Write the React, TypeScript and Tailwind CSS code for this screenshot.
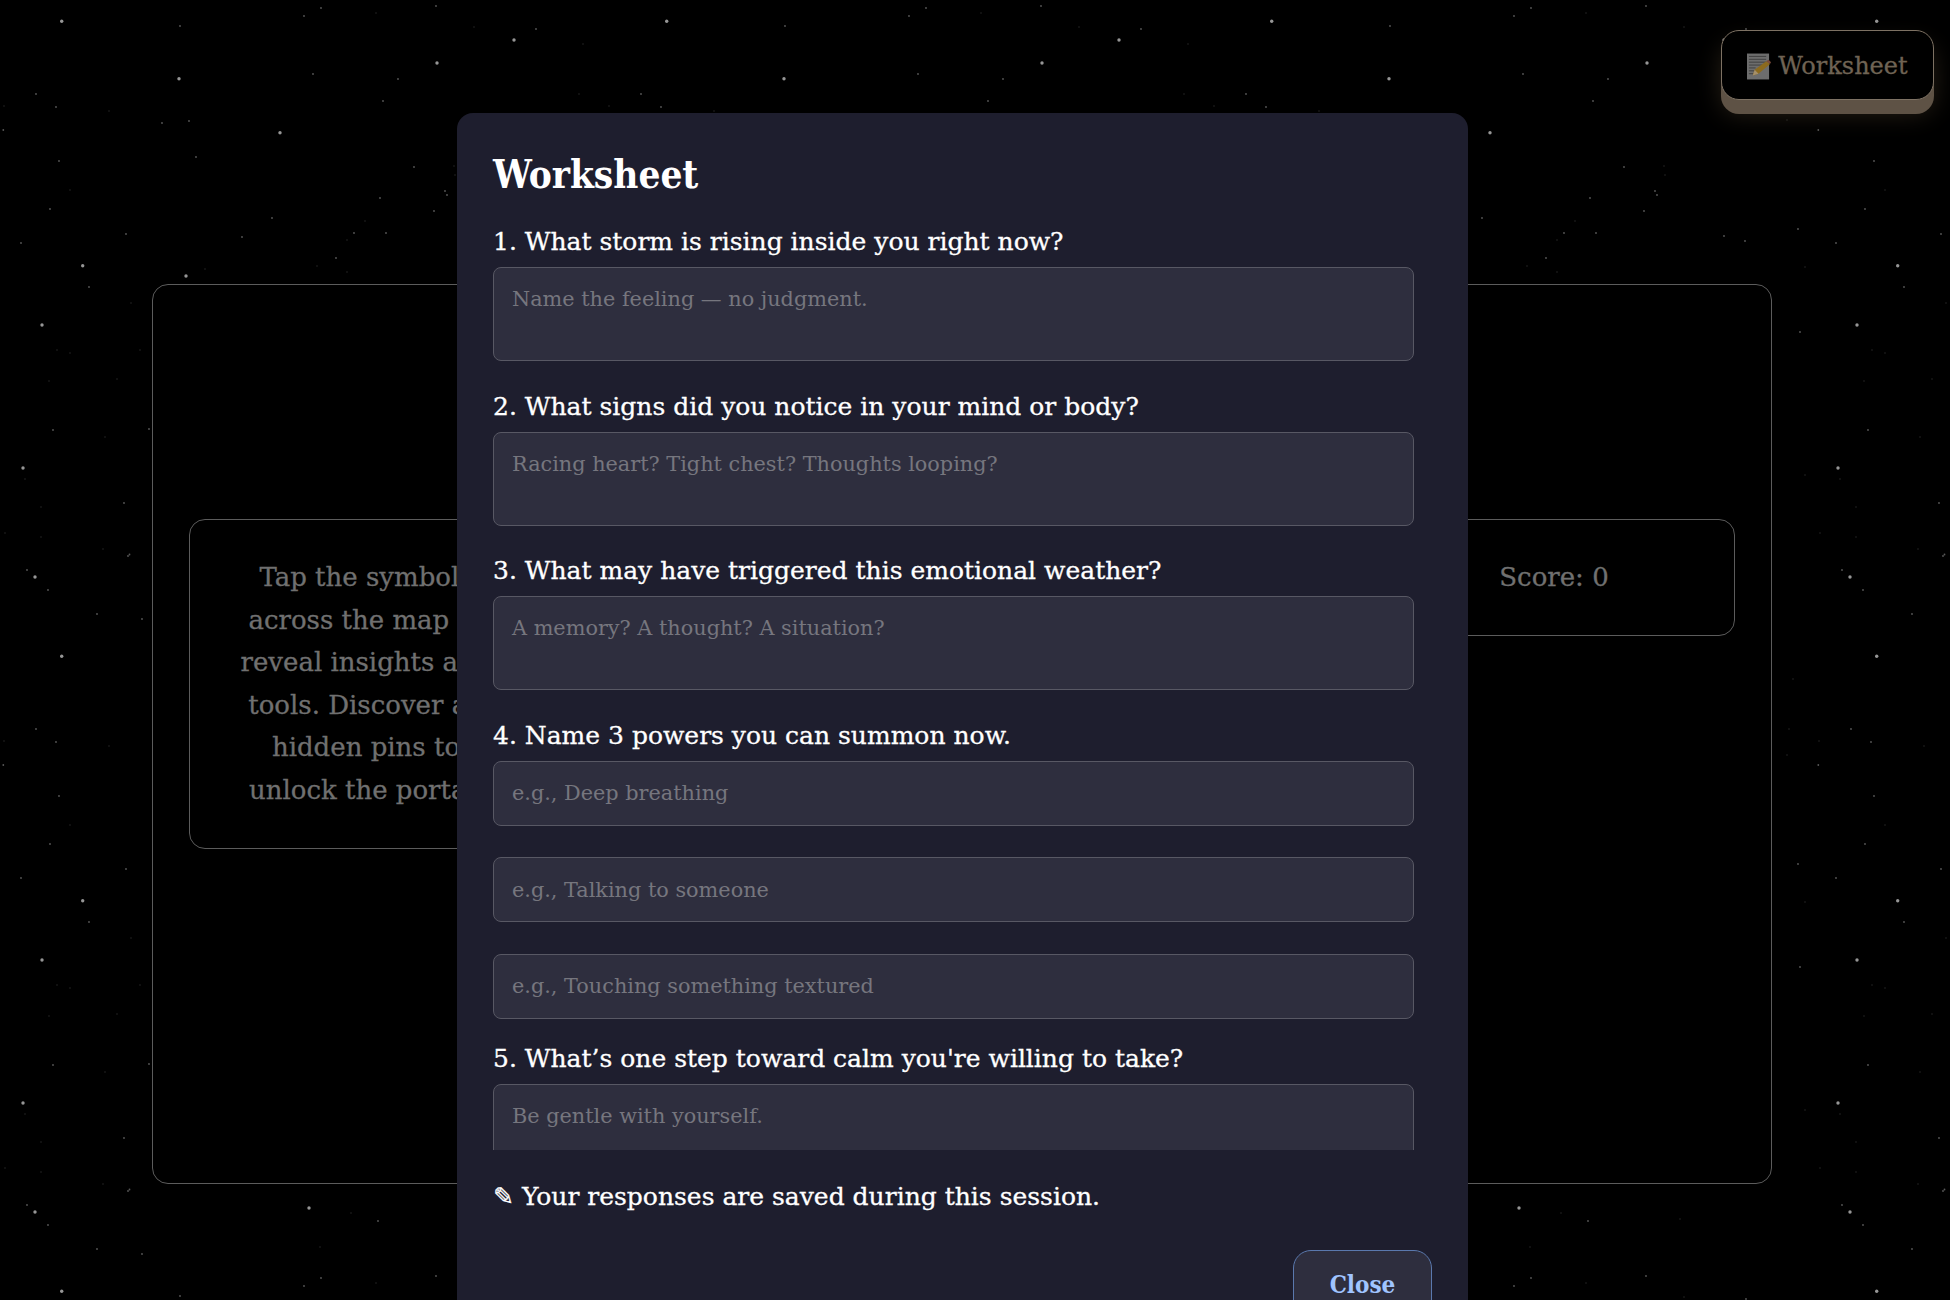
const BRIGHT: [number, number][] = [
  [61.7, 21.3], [437, 63], [179, 78.7], [280, 132.7], [82.7, 265.7], [186, 276],
  [42, 325], [23, 468], [35, 577], [309, 573], [514, 40],
];
const MEDIUM: [number, number][] = [
  [180, 26], [304, 16], [321, 8], [436, 6], [313, 74], [398, 79], [383, 101], [36, 94], [56, 107], [3.3, 130],
  [162, 123], [189, 121], [59, 161], [196, 157], [414, 167], [445, 191], [447, 195], [380, 198], [434, 211],
  [50, 209], [272, 218], [354, 233], [386, 233], [242, 237], [126, 234], [21, 243], [336, 258], [89, 287],
  [536, 29], [514, 236], [535, 241], [588, 229], [590, 332], [53, 430], [27, 570], [48, 590], [142, 619],
  [149, 429], [124, 503], [128, 556], [129.5, 554.5], [378, 586], [97, 614],
];
const FAINT: [number, number][] = [
  [4, 106], [109, 111], [70, 190], [365, 221], [347, 240], [317, 266], [347, 272], [205, 269], [454, 166],
  [455, 175], [474, 27], [583, 44], [579, 94], [577, 120], [595, 267], [595, 475], [5, 533], [105, 437],
  [140, 350], [117, 379], [57, 350], [70, 353], [49, 381], [25, 479], [41, 507], [41, 537], [131, 303],
  [103, 549], [351, 578], [470, 584], [320, 612], [376, 13],
];

function Stars() {
  return (
    <svg className="absolute inset-0 h-full w-full" aria-hidden="true">
      <defs>
        <pattern id="stars" width="605" height="635" patternUnits="userSpaceOnUse">
          {BRIGHT.map(([x, y]) => <circle key={`b${x}-${y}`} cx={x} cy={y} r="1.7" fill="#969696" />)}
          {MEDIUM.map(([x, y]) => <circle key={`m${x}-${y}`} cx={x} cy={y} r="0.9" fill="#585858" />)}
          {FAINT.map(([x, y]) => <circle key={`f${x}-${y}`} cx={x} cy={y} r="0.8" fill="#242424" />)}
        </pattern>
      </defs>
      <rect width="100%" height="100%" fill="url(#stars)" />
    </svg>
  );
}

function MemoIcon() {
  return (
    <svg width="24" height="27" viewBox="0 0 25 27" aria-hidden="true" className="shrink-0">
      <rect x="0" y="0" width="23" height="27" fill="#6d6d6d" />
      {[3, 6, 9, 12, 15, 18, 21].map((y) => (
        <line key={y} x1="2" x2={y > 12 ? 9 : 20} y1={y} y2={y} stroke="#3f3f3f" strokeWidth="1" />
      ))}
      <path d="M6 23l2-6L20 8l4 3-12 10z" fill="#8c6a1e" />
      <path d="M20 8l2.5-1.5L25 9l-1 2z" fill="#7a4a3a" />
      <path d="M6 23l2-6 4 4z" fill="#a58f6a" />
    </svg>
  );
}

const field =
  "block w-[921px] rounded-[8px] border border-[#585864] bg-[#2e2e3e] px-[18px] text-[20.8px] text-white outline-none placeholder:text-[#76767e] [font-family:'DejaVu_Serif',serif]";
const label = "block h-[32px] mb-[10px] text-[25px] leading-[34px] text-white [-webkit-text-stroke:0.3px_white]";

export default function App() {
  return (
    <div className="relative h-[1300px] w-full overflow-hidden bg-black [font-family:'DejaVu_Serif',serif]">
      <Stars />

      <main className="relative px-[152px] pt-[284px] mr-[178px]">
        <section className="h-[900px] w-[1620px] rounded-[16px] border border-[#5c5c5c] bg-black px-[36px] pt-[234px]">
          <div className="flex items-start justify-between">
            <div className="w-[370px] rounded-[16px] border border-[#5c5c5c] py-[36px] pr-[16px] text-center text-[26px] leading-[42.6px] text-[#707070] [-webkit-text-stroke:0.3px_#707070]">
              Tap the symbols<br />across the map to<br />reveal insights and<br />tools. Discover all<br />hidden pins to<br />unlock the portal.
            </div>
            <div className="w-[362px] rounded-[16px] border border-[#5c5c5c] py-[36px] text-center text-[26px] leading-[43px] text-[#707070] [-webkit-text-stroke:0.3px_#707070]">
              Score: 0
            </div>
          </div>
        </section>
      </main>

      <button className="absolute right-[16px] top-[30px] flex h-[70px] w-[213px] items-center justify-center gap-[7px] rounded-[18px] border border-[#7d7163] bg-black pt-[2px] text-[24px] text-[#6f6354] shadow-[0_14px_0_#5e5245,0_14px_24px_rgba(110,90,60,0.35)] [-webkit-text-stroke:0.3px_#6f6354]">
        <MemoIcon />
        <span>Worksheet</span>
      </button>

      <div className="absolute left-[457px] top-[113px] w-[1011px] rounded-[16px] bg-[#1e1e2e] px-[36px] pb-[40px] pt-[32px]">
        <h2 className="h-[58px] text-[38.4px] font-bold leading-[60px] text-white [font-stretch:condensed]">Worksheet</h2>

        <div className="h-[947px] overflow-hidden pt-[22px]">
          <label className={label}>1. What storm is rising inside you right now?</label>
          <textarea readOnly className={`${field} h-[94px] resize-none pt-[16px] mb-[28.5px]`} placeholder="Name the feeling — no judgment." />

          <label className={label}>2. What signs did you notice in your mind or body?</label>
          <textarea readOnly className={`${field} h-[94px] resize-none pt-[16px] mb-[28.5px]`} placeholder="Racing heart? Tight chest? Thoughts looping?" />

          <label className={label}>3. What may have triggered this emotional weather?</label>
          <textarea readOnly className={`${field} h-[94px] resize-none pt-[16px] mb-[28.5px]`} placeholder="A memory? A thought? A situation?" />

          <label className={label}>4. Name 3 powers you can summon now.</label>
          <input readOnly className={`${field} h-[65px] mb-[31.5px]`} placeholder="e.g., Deep breathing" />
          <input readOnly className={`${field} h-[65px] mb-[31.5px]`} placeholder="e.g., Talking to someone" />
          <input readOnly className={`${field} h-[65px] mb-[23px]`} placeholder="e.g., Touching something textured" />

          <label className={label}>5. What’s one step toward calm you're willing to take?</label>
          <textarea readOnly className={`${field} h-[94px] resize-none pt-[16px]`} placeholder="Be gentle with yourself." />
        </div>

        <p className="mt-[27px] h-[38px] text-[25px] leading-[40px] text-white [-webkit-text-stroke:0.3px_white]">
          <span className="[font-family:'DejaVu_Sans',sans-serif]">✎</span> Your responses are saved during this session.
        </p>

        <div className="mt-[35px] flex justify-end">
          <button className="h-[70px] w-[139px] rounded-[18px] border border-[#5a78ad] bg-[#2e2e3e] text-[24px] font-bold text-[#a0c4ff] [font-stretch:condensed]">
            Close
          </button>
        </div>
      </div>
    </div>
  );
}
